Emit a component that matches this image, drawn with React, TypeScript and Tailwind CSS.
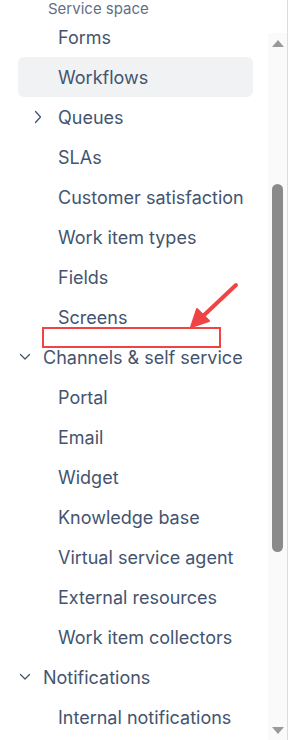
import React from 'react';

type Row = { label: string; kind: 'item' | 'header' | 'sub-collapsed'; active?: boolean };

const rows: Row[] = [
  { label: 'Forms', kind: 'item' },
  { label: 'Workflows', kind: 'item', active: true },
  { label: 'Queues', kind: 'sub-collapsed' },
  { label: 'SLAs', kind: 'item' },
  { label: 'Customer satisfaction', kind: 'item' },
  { label: 'Work item types', kind: 'item' },
  { label: 'Fields', kind: 'item' },
  { label: 'Screens', kind: 'item' },
  { label: 'Channels & self service', kind: 'header' },
  { label: 'Portal', kind: 'item' },
  { label: 'Email', kind: 'item' },
  { label: 'Widget', kind: 'item' },
  { label: 'Knowledge base', kind: 'item' },
  { label: 'Virtual service agent', kind: 'item' },
  { label: 'External resources', kind: 'item' },
  { label: 'Work item collectors', kind: 'item' },
  { label: 'Notifications', kind: 'header' },
  { label: 'Internal notifications', kind: 'item' },
];

function ChevronDown() {
  return (
    <svg width="12" height="8" viewBox="0 0 12 8" fill="none" className="shrink-0">
      <path d="M1.5 1.5 6 6l4.5-4.5" stroke="#44546f" strokeWidth="1.3" strokeLinecap="round" strokeLinejoin="round" />
    </svg>
  );
}

function ChevronRight() {
  return (
    <svg width="8" height="14" viewBox="0 0 8 14" fill="none" className="shrink-0">
      <path d="M1.5 1.5 6.5 7l-5 5.5" stroke="#44546f" strokeWidth="1.3" strokeLinecap="round" strokeLinejoin="round" />
    </svg>
  );
}

export default function App() {
  return (
    <div className="relative w-[300px] h-[740px] overflow-hidden bg-white text-[18px] text-[#44546f]" style={{ fontFamily: 'Inter, "Noto Sans", sans-serif' }}>
      <div className="flex h-full w-[288px] border-r border-[#dcdcdc]">
        {/* nav list */}
        <div className="w-[268px] pl-[18px] pr-[15px]">
          <div className="h-[17px] pt-[1px] pl-[30px] text-[15px] leading-[15px] text-[#626f86] whitespace-nowrap">Service space</div>
          {rows.map((r) => (
            <div
              key={r.label}
              className={
                'flex items-center h-10 rounded-md whitespace-nowrap ' +
                (r.active ? 'bg-[#f1f2f4] ' : '') +
                (r.kind === 'header' ? 'pl-[1px]' : r.kind === 'sub-collapsed' ? 'pl-[16px]' : 'pl-[40px]')
              }
            >
              {r.kind === 'header' && (
                <span className="w-[24px] flex items-center">
                  <ChevronDown />
                </span>
              )}
              {r.kind === 'sub-collapsed' && (
                <span className="w-[24px] flex items-center">
                  <ChevronRight />
                </span>
              )}
              <span>{r.label}</span>
            </div>
          ))}
        </div>
        {/* scrollbar */}
        <div className="w-[19px] pt-[33px] flex flex-col">
          <div className="flex-1 bg-[#fafafa] flex flex-col items-center">
            <div className="h-[14px] flex items-end justify-center">
              <div className="w-0 h-0 border-l-[6px] border-r-[6px] border-b-[7px] border-l-transparent border-r-transparent border-b-[#9a9a9a]" />
            </div>
            <div className="h-[137px]" />
            <div className="w-[11px] h-[368px] rounded-full bg-[#8a8a8a]" />
            <div className="flex-1" />
            <div className="h-[13px] flex items-start justify-center">
              <div className="w-0 h-0 border-l-[6px] border-r-[6px] border-t-[7px] border-l-transparent border-r-transparent border-t-[#9a9a9a]" />
            </div>
          </div>
        </div>
      </div>

      {/* annotation */}
      <div className="absolute left-[42px] top-[327px] w-[179px] h-[21px] border-2 border-[#f04444]" />
      <svg className="absolute left-0 top-0 pointer-events-none" width="300" height="740">
        <path d="M236 285 L201 318" stroke="#f04444" strokeWidth="4" strokeLinecap="round" />
        <path d="M191 327 L197 309 L209 321 Z" fill="#f04444" stroke="#f04444" strokeWidth="2" strokeLinejoin="round" />
      </svg>
    </div>
  );
}
